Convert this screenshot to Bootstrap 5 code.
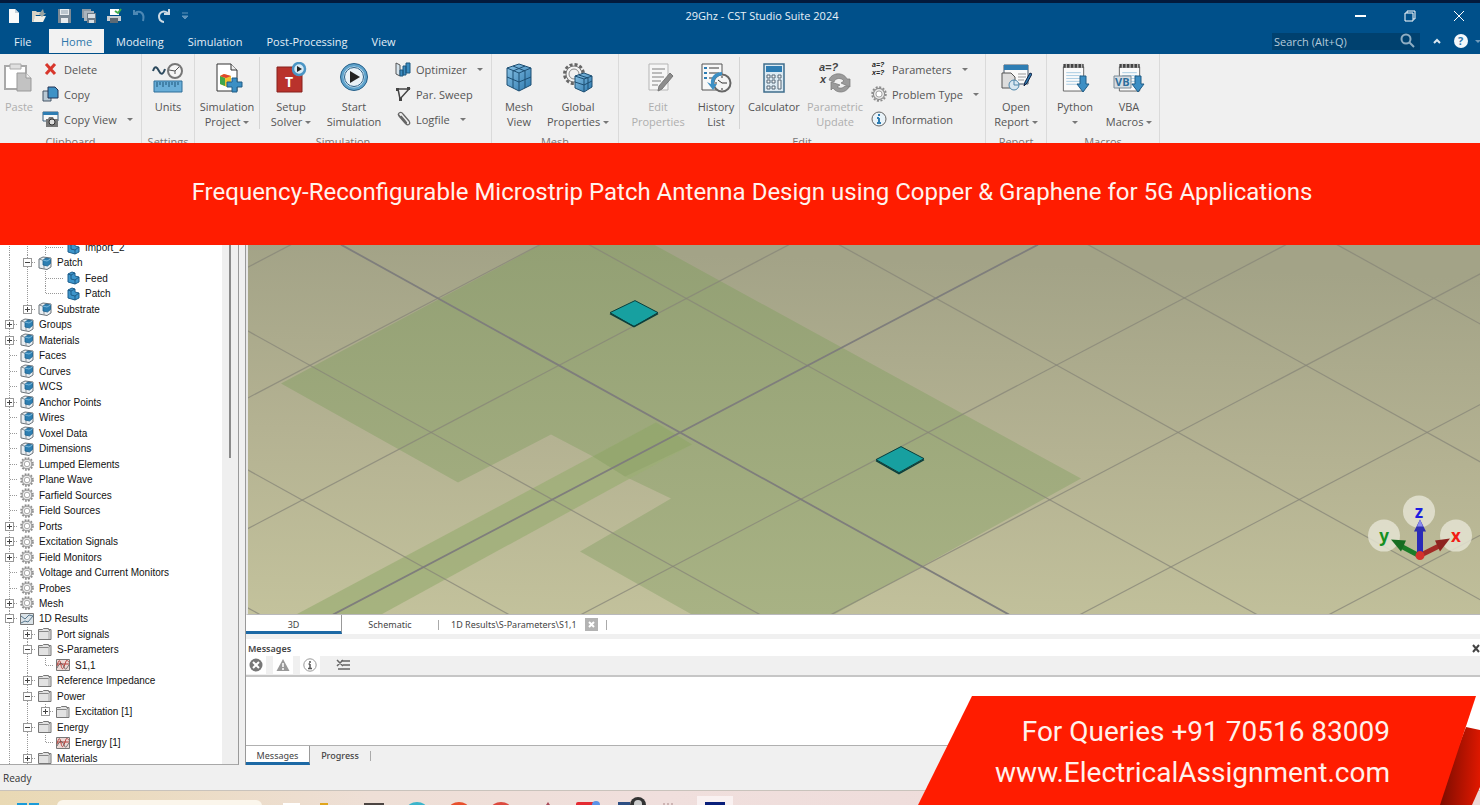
<!DOCTYPE html>
<html lang="en">
<head>
<meta charset="utf-8">
<meta name="viewport" content="width=device-width, initial-scale=1">
<title>29Ghz - CST Studio Suite 2024</title>
<link rel="stylesheet" href="https://cdn.jsdelivr.net/npm/bootstrap@5.3.0/dist/css/bootstrap.min.css">
<style>
  body { font-family: "Open Sans", "Noto Sans", sans-serif; font-size: 11px; line-height: 15px; background: #f0f0f0; color: #555; }
  button { font: inherit; color: inherit; background: none; border: 0; padding: 0; }
  svg { display: block; flex: none; }
  input:focus, button:focus { outline: none; }

  /* title bar and ribbon tabs */
  .titlebar { height: 29px; background: #00508a; border-top: 3px solid #031a3c; color: #e8f1f8; padding-left: 6px; }
  .titlebar .side { flex: 1 1 0; }
  .titlebar .doctitle { margin-left: 52px; }
  .quick { gap: 9px; }
  .winbtns { gap: 34px; padding-right: 14px; }
  .tabbar { height: 25px; background: #00508a; color: #e3eef6; }
  .tabbar .nav-link { color: inherit; padding: 5px 16px 4px 8px; height: 24px; border-radius: 0; }
  .tabbar .nav-link.first { width: 49px; padding: 5px 0 4px 14px; }
  .tabbar .nav-link.active { background: #f2f2f2; color: #2d77ab; padding: 5px 12px 4px; margin-right: 4px; }
  .tabtools { gap: 13px; }
  .searchbox { width: 148px; height: 17px; background: #00416f; }
  .searchbox input { flex: 1; min-width: 0; font: inherit; background: none; border: 0; padding: 0 2px; color: #cfe0ec; }
  .searchbox input::placeholder { color: #b4cadb; opacity: 1; }

  /* ribbon */
  .ribbon { height: 89px; background: #f0f0f0; overflow: hidden; }
  .rgroup { border-right: 1px solid #dadada; }
  .rgroup .tools { height: 80px; padding-top: 3px; }
  .rgroup .caption { text-align: center; line-height: 15px; color: #777; }
  .big { display: flex; flex-direction: column; align-items: center; text-align: center; padding-top: 5px; white-space: nowrap; }
  .big svg { margin-bottom: 5px; }
  .big:disabled, .off { color: #aeaeae; }
  .vsep { width: 1px; height: 72px; background: #d4d4d4; }
  .stack { display: flex; flex-direction: column; align-items: flex-start; margin-left: 9px; }
  .stack button { display: flex; align-items: center; height: 25px; gap: 5px; white-space: nowrap; }
  .caret { display: inline-block; border: 3px solid transparent; border-top-color: #777; border-bottom: 0; vertical-align: middle; }
  .stack .caret { margin-left: 5px; }
  .w38 { width: 38px; } .w52 { width: 52px; } .w54 { width: 54px; } .w56 { width: 56px; }
  .w60 { width: 60px; } .w62 { width: 62px; } .w64 { width: 64px; } .w68 { width: 68px; } .w78 { width: 78px; }

  /* banner */
  .banner, .contact { font-family: Roboto, sans-serif; }
  .banner { background: #ff1c00; color: #fff3ee; min-height: 102px; font-size: 24px; line-height: 32px; padding-left: 24px; padding-bottom: 4px; z-index: 2; }

  /* navigation tree */
  .treepane { width: 239px; background: #fff; border-right: 1px solid #9a9a9a; border-bottom: 1px solid #a8a8a8; overflow: hidden; }
  .tree { list-style: none; margin: -5px 0 0; padding: 0; height: calc(100% + 7px); display: grid; grid-auto-rows: 1fr; font-family: "Liberation Sans", Arial, sans-serif; font-size: 10px; color: #111; }
  .tree li { display: flex; align-items: stretch; min-height: 0; white-space: nowrap; }
  .tree li > svg { align-self: center; margin: 0 5px 0 2px; }
  .tree li > span { align-self: center; line-height: 15px; }
  .tree i { width: 18px; display: flex; align-items: center; justify-content: center; background-repeat: no-repeat; }
  .tree i.v { background-image: repeating-linear-gradient(#999 0 1px, #fff 1px 2px); background-size: 1px 100%; background-position: 9px 0; }
  .tree i.b { background-image: repeating-linear-gradient(#999 0 1px, #fff 1px 2px), repeating-linear-gradient(90deg, #999 0 1px, #fff 1px 2px); background-size: 1px 100%, 9px 1px; background-position: 9px 0, 10px 50%; }
  .tree i.l { background-image: repeating-linear-gradient(#999 0 1px, #fff 1px 2px), repeating-linear-gradient(90deg, #999 0 1px, #fff 1px 2px); background-size: 1px 50%, 100% 1px; background-position: 9px 0, 10px 50%; }
  .tree i.h { width: 10px; background-image: repeating-linear-gradient(90deg, #999 0 1px, #fff 1px 2px); background-size: 100% 1px; background-position: 0 50%; }
  .tw { width: 9px; height: 9px; border: 1px solid #999; background: linear-gradient(#444, #444) center/5px 1px no-repeat #fff; }
  .tw.plus { background: linear-gradient(#444, #444) center/5px 1px no-repeat, linear-gradient(#444, #444) center/1px 5px no-repeat #fff; }
  .track { width: 16px; background: #efefef; }
  .thumb { width: 2px; height: 41%; background: #8a8a8a; }

  /* view and message pane */
  .workarea { min-height: 0; }
  .main { margin-left: 6px; border-left: 1px solid #999; }
  .view3d { min-height: 0; overflow: hidden; border-left: 2px solid #e6e6e6; border-bottom: 1px solid #b9b9bb; }
  .doctabs, .pane { font-family: "Noto Sans", sans-serif; font-size: 9px; line-height: 14px; color: #444; }
  .doctabs { background: #fff; height: 19px; }
  .doctabs button, .msgtabs button { border-bottom: 3px solid transparent; padding-top: 4px; line-height: 12px; }
  .doctabs button.on, .msgtabs button.on { border-bottom-color: #1c69a5; background: #fff; border-right: 1px solid #999; }
  .bar { width: 1px; height: 10px; background: #aaa; }
  .doctabs .xbtn { width: 13px; height: 13px; padding: 0; border: 0; background: #b3b3b3; color: #fff; font-weight: bold; }
  .pane { margin-top: 5px; }
  .msghead { background: #fff; height: 17px; padding: 2px 0 0 2px; }
  .msgtools { height: 19px; gap: 7px; }
  .msgtools button { width: 20px; height: 18px; background: #fff; display: flex; align-items: center; justify-content: center; }
  .msgtools button.bare { background: none; margin-left: 6px; }
  .msglist { height: 71px; background: #fff; border-top: 2px solid #c6c6c6; border-bottom: 1px solid #b0b0b0; }
  .msgtabs { height: 19px; }
  .statusbar { height: 26px; font-size: 10px; color: #333; padding: 2px 3px 0; border-bottom: 1px solid #c9c3bc; }
  .taskbar { height: 14px; overflow: hidden; background: linear-gradient(90deg, #e9d9b4, #eedfd6 25%, #f0dfdd 45%, #ecd8d6); }

  /* contact ribbon over the lower right corner */
  .contact { position: absolute; right: 0; bottom: 0; width: 562px; height: 110px; color: #fff1ec; font-size: 28px; line-height: 41px; text-align: right; padding: 16px 90px 0 0; z-index: 3; }
  .contact svg { position: absolute; inset: 0; z-index: -1; }
  .contact a { color: inherit; text-decoration: none; }
</style>
</head>
<body class="vh-100 overflow-hidden d-flex flex-column position-relative">

<svg width="0" height="0" class="position-absolute">
  <defs>
    <linearGradient id="steel" x1="0" y1="0" x2="1" y2="1"><stop offset="0" stop-color="#8cc4e6"/><stop offset="1" stop-color="#2b78ae"/></linearGradient>
    <symbol id="t-cube" viewBox="0 0 14 14"><path d="M1 3 5 1l8 1v9l-4 2.500L1 12z" fill="#e9eef2" stroke="#6b7379"/><path d="M1 3l5 1.500V13" fill="none" stroke="#8b9399"/><path d="M5 4l3-2 4.500 1v4.500L9.500 10 5 9z" fill="#2d7fb2" stroke="#1b5f8d" stroke-width=".8"/><path d="M5 4l4 1 3.500-2" fill="none" stroke="#8ec6e6" stroke-width=".8"/></symbol>
    <symbol id="t-brick" viewBox="0 0 14 14"><path d="M2 3l4-2 3 1v3l4 1v5l-4 2-7-2z" fill="#3d95cb" stroke="#1c5f8e"/><path d="M2 3l3 1v4l4 1v4M5 4l4-2M9 9l4-3" fill="none" stroke="#174f78" stroke-width=".8"/></symbol>
    <symbol id="t-gear" viewBox="0 0 14 14"><circle cx="7" cy="7" r="6" fill="none" stroke="#8c8c8c" stroke-width="1.600" stroke-dasharray="1.800 1.340"/><circle cx="7" cy="7" r="4.900" fill="#e9e9e9" stroke="#8c8c8c"/><circle cx="7" cy="7" r="2.700" fill="#fff" stroke="#999" stroke-width=".8"/></symbol>
    <symbol id="t-folder" viewBox="0 0 14 14"><path d="M.500 2.500h4l1-1h5v1h2.500v10H.5z" fill="#e2e2e2" stroke="#777"/><path d="M.5 4.500h10l2-2" fill="none" stroke="#888"/><path d="M11 4v8" stroke="#aaa"/></symbol>
    <symbol id="t-chart" viewBox="0 0 14 14"><path d="M.5 1.500h13v11H.5z" fill="#dbe3e8" stroke="#777"/><path d="M1 4l4 3 4-4 4 1M1 11l4-2 3 1 5-6" fill="none" stroke="#58788e"/></symbol>
    <symbol id="t-plot" viewBox="0 0 14 14"><path d="M.5 1.500h13v11H.5z" fill="#ecd9d6" stroke="#777"/><path d="M1 8c2-8 3-6 4-1s2 5 4-1 2-3 4-2M1 6h12" fill="none" stroke="#b5433e"/><path d="M1 10c3-6 5-6 7-1s3 0 5-2" fill="none" stroke="#555" stroke-width=".8"/></symbol>
    <symbol id="arrowdown" viewBox="0 0 14 18"><path d="M4 1h6v8h3l-6 8-6-8h3z" fill="#3d8fc4" stroke="#1f5c86"/></symbol>
    <symbol id="notepad" viewBox="0 0 24 30"><path d="M1 4h21v25H1z" fill="#fafafa" stroke="#666"/><path d="M1 1h21v4H1z" fill="#444"/><path d="M4 0v5M8 0v5M12 0v5M16 0v5M20 0v5" stroke="#ddd"/><path d="M4 10h15M4 13h15M4 16h15M4 19h15M4 22h12" stroke="#a8cbe2"/></symbol>
  </defs>
</svg>

<header class="titlebar d-flex align-items-center">
  <div class="side quick d-flex align-items-center">
    <button aria-label="New"><svg width="16" height="16"><path d="M3 1h6l4 4v10H3z" fill="#fafafa"/><path d="M9 1v4h4" fill="#c8d2da"/></svg></button>
    <button aria-label="Open"><svg width="16" height="16"><path d="M1 3h4l1 1h5v3H5l-3 7H1z" fill="#d8d2c4"/><path d="M4 8h11l-3 6H2z" fill="#f2efe6"/><path d="M8 6l4-5 1 4 2 0-4 4z" fill="#9aa3a0"/></svg></button>
    <button aria-label="Save"><svg width="16" height="16"><path d="M2 1h13v14H2z" fill="#7c8a96"/><path d="M4 1h9v6H4zM5 10h7v5H5z" fill="#e8ecef"/><path d="M5 3h7M5 5h7" stroke="#8fa0ad"/></svg></button>
    <button aria-label="Save all"><svg width="16" height="16"><path d="M1 1h9v9H1z" fill="#8d9aa5"/><path d="M3 3h10v10H3z" fill="#a9b4bd"/><path d="M6 5h9v10H6z" fill="#6c7a86"/><path d="M7 6h7v4H7zM8 12h5v3H8z" fill="#d8dee3"/></svg></button>
    <button aria-label="Print"><svg width="16" height="16"><path d="M4 1h9v6H4z" fill="#fff"/><path d="M9 3l3 2 3-4" fill="none" stroke="#42ad49" stroke-width="2"/><path d="M1 8h14v5H1z" fill="#c9ced2"/><path d="M4 10h8v5H4z" fill="#5d6a74"/></svg></button>
    <button aria-label="Undo"><svg width="16" height="16"><path d="M4 5c5-3 10 0 8 8M3 2v4h4" fill="none" stroke="#4d88b4" stroke-width="2"/></svg></button>
    <button aria-label="Redo"><svg width="16" height="16"><path d="M12 5C6 1 1 6 4 12c1 1 2 2 4 2M13 1v5H8" fill="none" stroke="#cddbe5" stroke-width="2"/></svg></button>
    <button aria-label="Customize"><svg width="8" height="8"><path d="M1 1h6M1 4h6l-3 3z" stroke="#5f93ba" fill="#5f93ba"/></svg></button>
  </div>
  <div class="doctitle">29Ghz - CST Studio Suite 2024</div>
  <div class="side winbtns d-flex align-items-center justify-content-end">
    <button aria-label="Minimize"><svg width="16" height="14"><path d="M1 7h11" stroke="#fff" stroke-width="2"/></svg></button>
    <button aria-label="Restore"><svg width="14" height="14"><path d="M1 4h8v8H1zM3 4V2h8v8H9" fill="none" stroke="#fff"/></svg></button>
    <button aria-label="Close"><svg width="14" height="14"><path d="M2 2l10 10M12 2 2 12" stroke="#fff"/></svg></button>
  </div>
</header>

<nav class="tabbar d-flex justify-content-between">
  <div class="nav">
    <a class="nav-link first" href="#">File</a><a class="nav-link active" href="#">Home</a>
    <a class="nav-link" href="#">Modeling</a><a class="nav-link" href="#">Simulation</a>
    <a class="nav-link" href="#">Post-Processing</a><a class="nav-link" href="#">View</a>
  </div>
  <div class="tabtools d-flex align-items-center">
    <label class="searchbox d-flex align-items-center pe-1"><input type="search" placeholder="Search (Alt+Q)" aria-label="Search"><svg width="16" height="16"><circle cx="6" cy="6" r="4.500" fill="none" stroke="#8fadc2" stroke-width="2"/><path d="M9 9l5 5" stroke="#8fadc2" stroke-width="2"/></svg></label>
    <button aria-label="Collapse ribbon"><svg width="8" height="8"><path d="M1 6l3-3 3 3" fill="none" stroke="#dce8f1" stroke-width="2"/></svg></button>
    <button aria-label="Help" class="d-flex align-items-center"><svg width="26" height="16"><circle cx="7" cy="8" r="7" fill="#f4f8fb"/><text x="4" y="12" font-size="11" font-weight="bold" fill="#2d77ab">?</text><path d="M21 7h6l-3 3z" fill="#6f9abb"/></svg></button>
  </div>
</nav>

<section class="ribbon d-flex">
  <div class="rgroup" style="width:142px">
    <div class="tools d-flex">
      <button class="big w38" disabled><svg width="32" height="32"><path d="M2 4h21v23H2z" fill="#fff" stroke="#a9a9a9" stroke-width="2"/><path d="M7 2h11v5H7z" fill="#e0e0e0" stroke="#aaa"/><path d="M14 11h9l5 5v13H14z" fill="#c2c2c2" stroke="#999"/><path d="M23 11v5h5" fill="#eee" stroke="#999"/></svg>Paste</button>
      <div class="stack ms-1">
        <button><svg width="17" height="16"><path d="M4 3l9 10M13 3 4 13" stroke="#d8372c" stroke-width="3"/></svg>Delete</button>
        <button><svg width="17" height="16"><path d="M1 5h8v10H1z" fill="#b9c9d4" stroke="#456"/><path d="M6 1h7l3 3v8H6z" fill="#3f92c6" stroke="#235"/></svg>Copy</button>
        <button><svg width="17" height="16"><path d="M1 1h15v9H1z" fill="#f8f8f8" stroke="#3c5f7a"/><path d="M1 1h15v3H1z" fill="#2e7db3"/><path d="M4 8h2l1-2h4l1 2h4v8H4z" fill="#777"/><circle cx="10" cy="11" r="3" fill="#ddd" stroke="#333"/></svg>Copy View <span class="caret"></span></button>
      </div>
    </div>
    <div class="caption">Clipboard</div>
  </div>
  <div class="rgroup" style="width:53px">
    <div class="tools"><button class="big w52"><svg width="32" height="32"><path d="M1 9c2-6 4-4 6 0s4 4 6-2" fill="none" stroke="#2d4a5e" stroke-width="2"/><circle cx="23" cy="9" r="7" fill="#f6f6f6" stroke="#777" stroke-width="2"/><path d="M23 9l4-4M23 9l-6-1M23 9v3" stroke="#555"/><path d="M2 19h28v11H2z" fill="#69aed8" stroke="#2f6f99"/><path d="M5 20v5M8 20v3M11 20v5M14 20v3M17 20v5M20 20v3M23 20v5M26 20v3" stroke="#1e5579"/></svg>Units</button></div>
    <div class="caption">Settings</div>
  </div>
  <div class="rgroup" style="width:297px">
    <div class="tools d-flex">
      <button class="big w64"><svg width="32" height="32"><path d="M6 2h14l6 6v21H6z" fill="#fff" stroke="#333"/><path d="M20 2v6h6" fill="#eee" stroke="#333"/><path d="M9 14l4-2 7 2v8l-4 3-7-3z" fill="#f1c232"/><path d="M9 14l5 2v8l-5-2z" fill="#3fa64b"/><path d="M9 14l4-2 7 2-5 2z" fill="#e0452f"/><path d="M21 16h5v4h5v5h-5v5h-5v-5h-5v-5h5z" fill="#3c8fc4" stroke="#1f5c86"/></svg><span>Simulation<br>Project <span class="caret"></span></span></button>
      <div class="vsep"></div>
      <button class="big w62"><svg width="32" height="32"><path d="M2 5h25v25H2z" fill="#b9322c" stroke="#86211d"/><text x="10" y="25" font-size="14" font-weight="bold" fill="#fff">T</text><circle cx="24" cy="7" r="6" fill="#d7eaf5" stroke="#4b95c4" stroke-width="2.500"/><path d="M22 4l5 3-5 3z" fill="#222"/></svg><span>Setup<br>Solver <span class="caret"></span></span></button>
      <button class="big w64"><svg width="32" height="32"><circle cx="16" cy="15" r="12" fill="#e9f1f6" stroke="#5fa3cc" stroke-width="3"/><circle cx="16" cy="15" r="13.500" fill="none" stroke="#265f88"/><circle cx="16" cy="15" r="9.500" fill="none" stroke="#265f88"/><path d="M12 9l10 6-10 6z" fill="#222"/></svg><span>Start<br>Simulation</span></button>
      <div class="stack">
        <button><svg width="16" height="16"><path d="M1 2l4 2v11l-4-2z" fill="#d7e5ee" stroke="#555"/><path d="M5 9h3v6H5zM8 5h3v9H8zM11 2h4v10h-4z" fill="#3b8cc0" stroke="#1c567f"/></svg>Optimizer <span class="caret"></span></button>
        <button><svg width="16" height="16"><path d="M3 3h11L5 13z" fill="none" stroke="#444" stroke-width="1.500"/><path d="M1 2h3v3H1zM12 1h3v3h-3zM4 12h3v3H4z" fill="#444"/></svg>Par. Sweep</button>
        <button><svg width="16" height="16"><path d="M3 3l8 10c2 2 5 0 3-3L8 3C6 0 2 2 4 5l6 7c1 1 2 0 1-1L6 5" fill="none" stroke="#666" stroke-width="1.300"/></svg>Logfile <span class="caret"></span></button>
      </div>
    </div>
    <div class="caption">Simulation</div>
  </div>
  <div class="rgroup" style="width:127px">
    <div class="tools d-flex">
      <button class="big w54"><svg width="32" height="32"><path d="M4 6l12-4 12 4v17l-12 6-12-6z" fill="url(#steel)" stroke="#1d4e72"/><path d="M4 6l12 5 12-5M16 11v18M10 4l12 5v17M22 4L10 9v17M4 15l12 5 12-5" fill="none" stroke="#1d4e72"/></svg><span>Mesh<br>View</span></button>
      <button class="big w64"><svg width="32" height="32"><circle cx="12" cy="12" r="9.500" fill="none" stroke="#666" stroke-width="3" stroke-dasharray="3 2"/><circle cx="12" cy="12" r="8" fill="#f4f4f4" stroke="#777"/><circle cx="12" cy="12" r="5" fill="#f0f0f0" stroke="#888"/><path d="M13 14l9-3 8 3v11l-8 5-9-4z" fill="url(#steel)" stroke="#1d4e72"/><path d="M13 14l9 3 8-3M22 17v13M17 13l9 3v11M13 20l9 3 8-4" fill="none" stroke="#1d4e72"/></svg><span>Global<br>Properties <span class="caret"></span></span></button>
    </div>
    <div class="caption">Mesh</div>
  </div>
  <div class="rgroup" style="width:367px">
    <div class="tools d-flex">
      <button class="big w78" disabled><svg width="32" height="32"><path d="M7 2h19v26H7z" fill="#f6f6f6" stroke="#b5b5b5"/><path d="M10 7h13M10 11h10M10 15h12M10 19h9M10 23h6" stroke="#bbb" stroke-width="2"/><path d="M16 29l1-5L28 11l3 3-11 13z" fill="#8c8c8c" stroke="#777"/></svg><span>Edit<br>Properties</span></button>
      <button class="big w38"><svg width="32" height="32"><path d="M2 2h20v26H2z" fill="#f8f8f8" stroke="#555"/><path d="M9 6h10M9 11h10M9 16h7" stroke="#777" stroke-width="1.500"/><path d="M4 6h3M4 11h3M4 16h3" stroke="#2e7db3" stroke-width="2"/><circle cx="22" cy="21" r="8.500" fill="#f4f4f4" stroke="#666" stroke-width="2"/><path d="M22 21l-4-3M22 21h5M22 14v2M22 26v2M15 21h2" stroke="#333"/><path d="M22 10c-7 0-12 5-11 12l-4-2 6 8 4-6-3 0c0-5 3-8 8-9z" fill="#3c8fc4"/></svg><span>History<br>List</span></button>
      <div class="vsep ms-1"></div>
      <button class="big w68"><svg width="32" height="32"><path d="M6 2h20v28H6z" fill="#dceaf3" stroke="#3f6d8c" stroke-width="1.500"/><path d="M8 4h16v6H8z" fill="#2e7db3"/><path d="M9 13h3v3H9zM14 13h3v3h-3zM20 13h3v3h-3zM9 18h3v3H9zM14 18h3v3h-3zM9 24h3v3H9zM14 24h3v3h-3zM20 18h3v9h-3z" fill="#f6f6f6" stroke="#567"/></svg>Calculator</button>
      <button class="big w54" disabled><svg width="32" height="32" font-family="Liberation Sans, sans-serif" font-size="11" font-weight="bold" font-style="italic" fill="#444"><text x="0" y="9">a=?</text><text x="1" y="21">x</text><path d="M10 18c2-7 14-9 18-1h3v8l-9-4 3-2c-3-4-9-3-10 1zM30 25c-3 6-12 7-16 1l-2 2v-8l9 3-3 2c3 2 6 1 8-1z" fill="#9b9b9b" stroke="#777" stroke-width=".7"/></svg><span>Parametric<br>Update</span></button>
      <div class="stack">
        <button><svg width="16" height="16" font-family="Liberation Sans, sans-serif" font-size="7" font-weight="bold" font-style="italic" fill="#222"><text x="1" y="6">a=?</text><text x="1" y="14">x=?</text></svg>Parameters <span class="caret"></span></button>
        <button><svg width="16" height="16" viewBox="0 0 14 14"><use href="#t-gear"/></svg>Problem Type <span class="caret"></span></button>
        <button><svg width="16" height="16"><circle cx="8" cy="8" r="7" fill="#e9f3f9" stroke="#666"/><path d="M8 7v5M6 7h2M6 12h4M8 3v2" stroke="#2e7db3" stroke-width="2"/></svg>Information</button>
      </div>
    </div>
    <div class="caption">Edit</div>
  </div>
  <div class="rgroup" style="width:61px">
    <div class="tools"><button class="big w60"><svg width="32" height="32"><path d="M4 3h24v19H4z" fill="#fafafa" stroke="#456"/><path d="M4 3h24v5H4z" fill="#2e7db3"/><path d="M2 11h9l4 4v11H2z" fill="#ddd" stroke="#555"/><path d="M18 12h8M18 15h8M18 18h6" stroke="#999"/><circle cx="14" cy="23" r="5" fill="#d9e8f1" stroke="#4e86aa"/><path d="M14 23v-5M14 23h5" stroke="#4e86aa"/><path d="M24 24l1-4 5-9 2 1-5 9z" fill="#2e7db3" stroke="#124"/></svg><span>Open<br>Report <span class="caret"></span></span></button></div>
    <div class="caption">Report</div>
  </div>
  <div class="rgroup" style="width:113px">
    <div class="tools d-flex">
      <button class="big w56"><svg width="32" height="32"><use href="#notepad" x="3" y="1" width="24" height="29"/><use href="#arrowdown" x="17" y="13" width="14" height="18"/></svg><span>Python<br><span class="caret"></span></span></button>
      <button class="big w52"><svg width="32" height="32"><use href="#notepad" x="5" y="1" width="24" height="29"/><path d="M1 14h17v12H1z" fill="#d6dde3" stroke="#7b8a95"/><text x="2" y="24" font-size="11" font-weight="bold" fill="#2e6f9c">VB</text><use href="#arrowdown" x="18" y="13" width="14" height="18"/></svg><span>VBA<br>Macros <span class="caret"></span></span></button>
    </div>
    <div class="caption">Macros</div>
  </div>
</section>

<h1 class="banner m-0 fw-normal d-flex align-items-center justify-content-center position-relative text-center">Frequency-Reconfigurable Microstrip Patch Antenna Design using Copper &amp; Graphene for 5G Applications</h1>

<div class="workarea flex-grow-1 d-flex">
  <aside class="treepane d-flex flex-shrink-0">
    <ul class="tree flex-grow-1">
      <li><i class="v"></i><i class="v"></i><i class="b"></i><i class="h"></i><svg width="14" height="14"><use href="#t-brick"/></svg><span>Import_2</span></li>
      <li><i class="v"></i><i class="b"><button class="tw" aria-label="Collapse"></button></i><svg width="14" height="14"><use href="#t-cube"/></svg><span>Patch</span></li>
      <li><i class="v"></i><i class="v"></i><i class="b"></i><i class="h"></i><svg width="14" height="14"><use href="#t-brick"/></svg><span>Feed</span></li>
      <li><i class="v"></i><i class="v"></i><i class="l"></i><i class="h"></i><svg width="14" height="14"><use href="#t-brick"/></svg><span>Patch</span></li>
      <li><i class="v"></i><i class="l"><button class="tw plus" aria-label="Expand"></button></i><svg width="14" height="14"><use href="#t-cube"/></svg><span>Substrate</span></li>
      <li><i class="b"><button class="tw plus" aria-label="Expand"></button></i><svg width="14" height="14"><use href="#t-cube"/></svg><span>Groups</span></li>
      <li><i class="b"><button class="tw plus" aria-label="Expand"></button></i><svg width="14" height="14"><use href="#t-cube"/></svg><span>Materials</span></li>
      <li><i class="b"></i><svg width="14" height="14"><use href="#t-cube"/></svg><span>Faces</span></li>
      <li><i class="b"></i><svg width="14" height="14"><use href="#t-cube"/></svg><span>Curves</span></li>
      <li><i class="b"></i><svg width="14" height="14"><use href="#t-cube"/></svg><span>WCS</span></li>
      <li><i class="b"><button class="tw plus" aria-label="Expand"></button></i><svg width="14" height="14"><use href="#t-cube"/></svg><span>Anchor Points</span></li>
      <li><i class="b"></i><svg width="14" height="14"><use href="#t-cube"/></svg><span>Wires</span></li>
      <li><i class="b"></i><svg width="14" height="14"><use href="#t-cube"/></svg><span>Voxel Data</span></li>
      <li><i class="b"></i><svg width="14" height="14"><use href="#t-cube"/></svg><span>Dimensions</span></li>
      <li><i class="b"></i><svg width="14" height="14"><use href="#t-gear"/></svg><span>Lumped Elements</span></li>
      <li><i class="b"></i><svg width="14" height="14"><use href="#t-gear"/></svg><span>Plane Wave</span></li>
      <li><i class="b"></i><svg width="14" height="14"><use href="#t-gear"/></svg><span>Farfield Sources</span></li>
      <li><i class="b"></i><svg width="14" height="14"><use href="#t-gear"/></svg><span>Field Sources</span></li>
      <li><i class="b"><button class="tw plus" aria-label="Expand"></button></i><svg width="14" height="14"><use href="#t-gear"/></svg><span>Ports</span></li>
      <li><i class="b"><button class="tw plus" aria-label="Expand"></button></i><svg width="14" height="14"><use href="#t-gear"/></svg><span>Excitation Signals</span></li>
      <li><i class="b"><button class="tw plus" aria-label="Expand"></button></i><svg width="14" height="14"><use href="#t-gear"/></svg><span>Field Monitors</span></li>
      <li><i class="b"></i><svg width="14" height="14"><use href="#t-gear"/></svg><span>Voltage and Current Monitors</span></li>
      <li><i class="b"></i><svg width="14" height="14"><use href="#t-gear"/></svg><span>Probes</span></li>
      <li><i class="b"><button class="tw plus" aria-label="Expand"></button></i><svg width="14" height="14"><use href="#t-gear"/></svg><span>Mesh</span></li>
      <li><i class="b"><button class="tw" aria-label="Collapse"></button></i><svg width="14" height="14"><use href="#t-chart"/></svg><span>1D Results</span></li>
      <li><i class="v"></i><i class="b"><button class="tw plus" aria-label="Expand"></button></i><svg width="14" height="14"><use href="#t-folder"/></svg><span>Port signals</span></li>
      <li><i class="v"></i><i class="b"><button class="tw" aria-label="Collapse"></button></i><svg width="14" height="14"><use href="#t-folder"/></svg><span>S-Parameters</span></li>
      <li><i class="v"></i><i class="v"></i><i class="l"></i><svg width="14" height="14"><use href="#t-plot"/></svg><span>S1,1</span></li>
      <li><i class="v"></i><i class="b"><button class="tw plus" aria-label="Expand"></button></i><svg width="14" height="14"><use href="#t-folder"/></svg><span>Reference Impedance</span></li>
      <li><i class="v"></i><i class="b"><button class="tw" aria-label="Collapse"></button></i><svg width="14" height="14"><use href="#t-folder"/></svg><span>Power</span></li>
      <li><i class="v"></i><i class="v"></i><i class="l"><button class="tw plus" aria-label="Expand"></button></i><svg width="14" height="14"><use href="#t-folder"/></svg><span>Excitation [1]</span></li>
      <li><i class="v"></i><i class="b"><button class="tw" aria-label="Collapse"></button></i><svg width="14" height="14"><use href="#t-folder"/></svg><span>Energy</span></li>
      <li><i class="v"></i><i class="v"></i><i class="l"></i><svg width="14" height="14"><use href="#t-plot"/></svg><span>Energy [1]</span></li>
      <li><i class="v"></i><i class="b"><button class="tw plus" aria-label="Expand"></button></i><svg width="14" height="14"><use href="#t-folder"/></svg><span>Materials</span></li>
    </ul>
    <div class="track d-flex justify-content-center"><div class="thumb"></div></div>
  </aside>

  <main class="main flex-grow-1 d-flex flex-column">
    <div class="view3d flex-grow-1">
      <svg width="100%" height="100%" viewBox="248 245 1232 370" preserveAspectRatio="xMidYMid slice" role="img" aria-label="3D view of the antenna">
        <defs>
          <linearGradient id="ground" x1=".1" y1="0" x2="0" y2="1"><stop offset="0" stop-color="#a3a387"/><stop offset=".5" stop-color="#b4b292"/><stop offset="1" stop-color="#c3c29c"/></linearGradient>
          <linearGradient id="sheet" x1="0" y1="0" x2="0" y2="1"><stop offset="0" stop-color="#93a074"/><stop offset="1" stop-color="#a8b284"/></linearGradient>
        </defs>
        <rect x="248" y="245" width="1232" height="370" fill="url(#ground)"/>
        <path d="M541 245 281 384l177 99 93-48 42 22 32 20 46 22-91 53 112 63h142l247-136L654 245z" fill="url(#sheet)"/>
        <path d="M656 423 296 615h85l311-170z" fill="#9cad76" fill-opacity=".75"/>
        <path d="M656 423l-63 34 32 20 67-32z" fill="#90a36a" fill-opacity=".6"/>
        <g fill="none" stroke="#878578" stroke-width="1.200" stroke-opacity=".75">
          <path d="M-159 245l668 370M92 245l668 370M589 245l668 370M839 245l668 370M1088 245l668 370M1337 245l668 370M-408 245l668 370"/>
          <path d="M291 245l-705 370M540 245l-705 370M789 245 84 615M1286 245 581 615M1536 245 831 615M1785 245l-705 370M2034 245l-705 370"/>
        </g>
        <path d="M341 245l668 370M1038 245 333 615" fill="none" stroke="#7f7e7c" stroke-width="1.800"/>
        <g fill="#17a0a0" stroke="#0b3f3c" stroke-linejoin="round">
          <path d="M635 301l23 12-24 14-24-14z"/><path d="M901 447l23 12-25 14-23-13z"/>
        </g>
        <path d="M610 314l24 13 24-13M876 461l23 13 25-14" fill="none" stroke="#0b3f3c" stroke-width="1.500"/>
        <g font-family="Noto Sans, sans-serif" font-weight="bold" font-size="17" text-anchor="middle">
          <g fill="#e4e3d2" fill-opacity=".85"><circle cx="1384" cy="536" r="16"/><circle cx="1419" cy="512" r="16"/><circle cx="1456" cy="536" r="16"/></g>
          <text x="1384" y="542" fill="#159022">y</text><text x="1419" y="518" fill="#1d1de0">z</text><text x="1456" y="542" fill="#f21c14">x</text>
          <path d="M1419 556 1400 546" stroke="#1b7d28" stroke-width="5"/><path d="M1391 540l15 1-5 11z" fill="#176d22"/>
          <path d="M1420 556l20-10" stroke="#a32b26" stroke-width="5"/><path d="M1450 539l-15 2 5 11z" fill="#8e2420"/>
          <path d="M1420 555v-25" stroke="#2a2ab8" stroke-width="6"/><path d="M1420 520l-6 12h12z" fill="#2f2fae"/><path d="M1420 520l-3 7h6z" fill="#8c8cf0"/>
          <circle cx="1420" cy="556" r="4.500" fill="#d4322c"/>
        </g>
      </svg>
    </div>
    <div class="doctabs d-flex align-items-center flex-shrink-0">
      <button class="on align-self-stretch" style="width:96px">3D</button>
      <button class="align-self-stretch" style="width:96px">Schematic</button>
      <span class="bar"></span>
      <button class="align-self-stretch ms-2 ps-1 pe-2">1D Results\S-Parameters\S1,1</button>
      <button class="xbtn" aria-label="Close tab"><svg width="13" height="13"><path d="M4 4l5 5M9 4 4 9" stroke="#fff" stroke-width="2"/></svg></button>
      <span class="bar ms-2 me-auto"></span>
    </div>
    <section class="pane flex-shrink-0">
      <div class="msghead d-flex align-items-center justify-content-between"><span class="fw-semibold">Messages</span><button aria-label="Close pane"><svg width="9" height="9"><path d="M2 1l6 7M8 1 2 8" stroke="#444" stroke-width="2"/></svg></button></div>
      <div class="msgtools d-flex">
        <button aria-label="Errors"><svg width="14" height="14"><circle cx="7" cy="7" r="6.500" fill="#777"/><path d="M4 4l6 6M10 4l-6 6" stroke="#fff" stroke-width="2"/></svg></button>
        <button aria-label="Warnings"><svg width="14" height="14"><path d="M7 1l6.500 12H.5z" fill="#999"/><path d="M7 5v4M7 10v2" stroke="#fff" stroke-width="1.500"/></svg></button>
        <button aria-label="Information"><svg width="14" height="14"><circle cx="7" cy="7" r="6.200" fill="#fff" stroke="#999"/><path d="M7 6v4M5.500 6H7M5 10.500h4M7 3v2" stroke="#555" stroke-width="1.500"/></svg></button>
        <button class="bare" aria-label="Clear messages"><svg width="14" height="12"><path d="M5 2h9M7 6h7M2 10h12M1 1l6 6M7 1 1 7" stroke="#666" stroke-width="1.500"/></svg></button>
      </div>
      <div class="msglist"></div>
      <div class="msgtabs d-flex align-items-center">
        <button class="on align-self-stretch w64">Messages</button>
        <button class="align-self-stretch w60 fw-medium">Progress</button><span class="bar"></span>
      </div>
    </section>
  </main>
</div>

<footer class="statusbar d-flex align-items-center flex-shrink-0">Ready</footer>
<div class="taskbar flex-shrink-0">
  <svg width="740" height="14">
    <path d="M17 12h10v2H17zM29 12h10v2H29z" fill="#1b9bd8"/><rect x="57" y="9" width="205" height="12" rx="6" fill="#fbf6ec"/>
    <path d="M283 12h17v2h-17z" fill="#fff"/><path d="M320 12h8v2h-8z" fill="#e0a51b"/><path d="M364 12h20v2h-20z" fill="#4d4542"/>
    <ellipse cx="417" cy="18" rx="10" ry="7" fill="#3bb4cb"/><ellipse cx="459" cy="18" rx="10" ry="7" fill="#e8502c"/><ellipse cx="501" cy="18" rx="10" ry="7" fill="#dc4a3e"/>
    <path d="M546 14l2-3 2 3z" fill="#a84a58"/><rect x="576" y="11" width="20" height="8" rx="2" fill="#e42a31"/><circle cx="596" cy="14" r="4" fill="#5a93e8"/>
    <path d="M618 11h12v3h-12z" fill="#2d4f83"/><circle cx="638" cy="14" r="8" fill="#333"/><circle cx="638" cy="13" r="4" fill="#ccc"/>
    <path d="M663 13h12" stroke="#a88" stroke-dasharray="2 2"/><path d="M697 5h36v9h-36z" fill="#f9f1f1"/><path d="M705 11h20v3h-20z" fill="#0a1f7a"/>
  </svg>
</div>

<aside class="contact">
  <svg width="562" height="110"><defs><linearGradient id="fold" x1="0" x2="1" y1=".5" y2=".6"><stop offset="0" stop-color="#6d0a00"/><stop offset="1" stop-color="#e01800"/></linearGradient></defs>
    <path d="M548 32l14 3v57l-8 18h-36z" fill="url(#fold)"/><path d="M54 1h504l-36 109H0z" fill="#ff1c00"/></svg>
  <div>For Queries +91 70516 83009</div>
  <a href="#">www.ElectricalAssignment.com</a>
</aside>

<script src="https://cdn.jsdelivr.net/npm/bootstrap@5.3.0/dist/js/bootstrap.bundle.min.js"></script>
</body>
</html>
